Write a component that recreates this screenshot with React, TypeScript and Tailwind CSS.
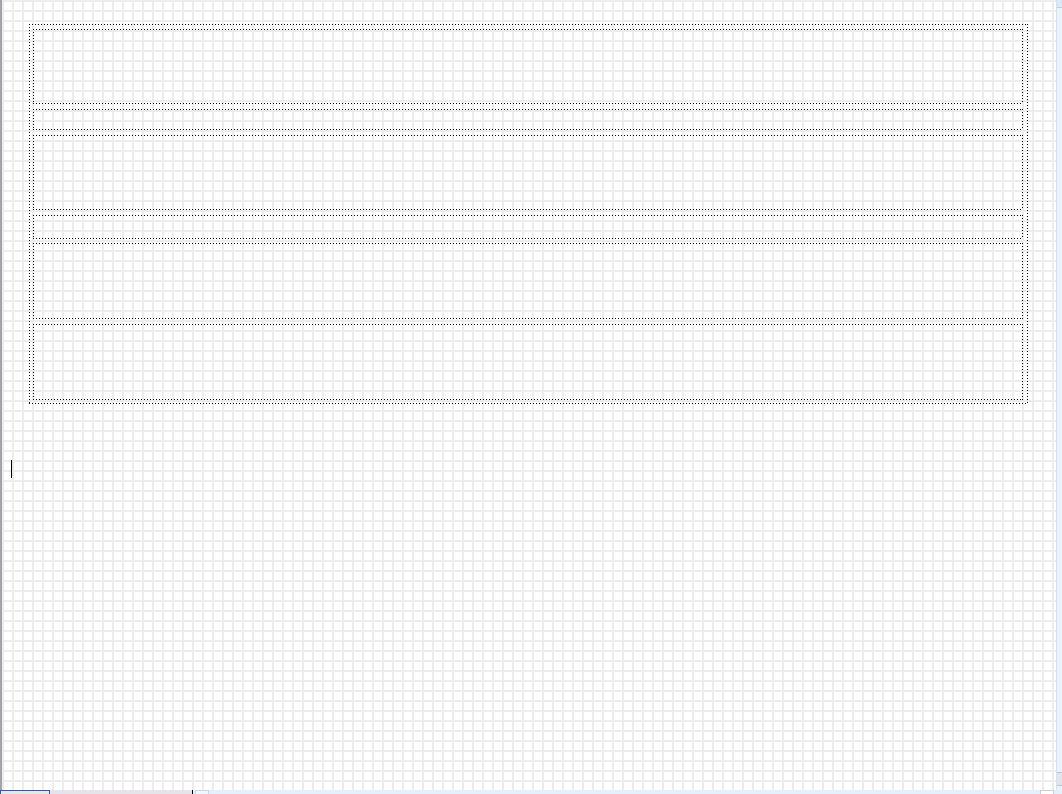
import React from "react";

const dotted =
  "[background-image:repeating-linear-gradient(to_right,#000_0_1px,transparent_1px_3px),repeating-linear-gradient(to_right,#000_0_1px,transparent_1px_3px),repeating-linear-gradient(to_bottom,#000_0_1px,transparent_1px_3px),repeating-linear-gradient(to_bottom,#000_0_1px,transparent_1px_3px)] [background-size:100%_1px,100%_1px,1px_100%,1px_100%] [background-position:0_0,0_100%,0_0,100%_0] [background-repeat:no-repeat]";

function Row({ h }: { h: string }) {
  return <div className={`${dotted} ${h} w-full`} />;
}

export default function App() {
  return (
    <div className="w-[1062px] h-[794px] overflow-hidden flex flex-col bg-white font-['Liberation_Sans',sans-serif]">
      <div className="flex flex-1 min-h-0">
        <div className="w-[2px] bg-[#a4a4ac]" />
        <div className="flex-1 relative bg-white [background-image:linear-gradient(to_right,#ececec_2px,transparent_2px),linear-gradient(to_bottom,#ececec_2px,transparent_2px)] [background-size:10px_10px]">
          <div className={`${dotted} ml-[27px] mt-[24px] w-[999px] h-[380px] flex flex-col pt-[5px] pl-[4px] pr-[5px] pb-[4px]`}>
            <div className="flex flex-col w-full h-full">
              <Row h="h-[75px]" />
              <div className="h-[5px]" />
              <Row h="h-[21px]" />
              <div className="h-[5px]" />
              <Row h="h-[75px]" />
              <div className="h-[5px]" />
              <Row h="h-[24px]" />
              <div className="h-[4px]" />
              <Row h="h-[76px]" />
              <div className="h-[5px]" />
              <Row h="h-[76px]" />
            </div>
          </div>
          <div className="absolute left-[9px] top-[460px] w-px h-[18px] bg-black" />
        </div>
        <div className="w-[6px] bg-[#eaf2fc] border-l border-[#d2e0f0] flex flex-col justify-between">
          <div className="h-[8px] bg-[#dce8f6] border-b border-[#c0d0e4]" />
          <div className="h-[14px] mb-[4px] bg-[#e2e6ec] border-y border-[#b8c4d4]" />
        </div>
      </div>
      <div className="h-[4px] flex shrink-0">
        <div className="w-[50px] bg-[#e6e6ee] border-t border-x border-[#2f5ca8]" />
        <div className="w-[142px] bg-[#e6e4ea]" />
        <div className="w-px bg-black" />
        <div className="flex-1 bg-[#e4f0fc] flex">
          <div className="w-[14px] ml-[2px] bg-[#f0f6fe] border-t border-x border-[#c8d8ec]" />
          <div className="flex-1" />
          <div className="w-[14px] mr-[8px] bg-white border-t border-x border-[#c8d0dc]" />
        </div>
      </div>
    </div>
  );
}
